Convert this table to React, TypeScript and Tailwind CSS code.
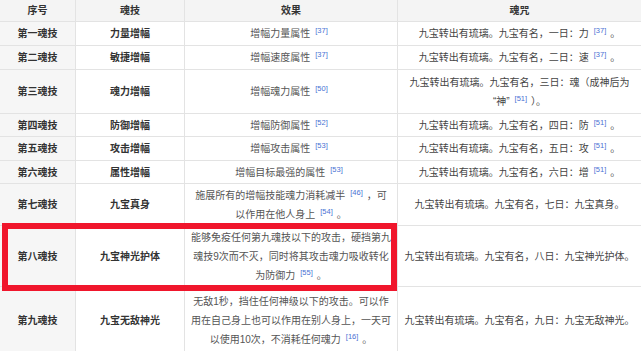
type Cell = React.ReactNode;

const Ref = ({ n }: { n: string }) => (
  <sup className="text-[7.5px] text-[#4a72d4] ml-[5px] mr-[4px]">[{n}]</sup>
);

const rows: { no: string; name: string; effect: Cell; spell: Cell }[] = [
  {
    no: "第一魂技",
    name: "力量增幅",
    effect: <>增幅力量属性<Ref n="37" /></>,
    spell: <>九宝转出有琉璃。九宝有名，一日：力<Ref n="37" />。</>,
  },
  {
    no: "第二魂技",
    name: "敏捷增幅",
    effect: <>增幅速度属性<Ref n="37" /></>,
    spell: <>九宝转出有琉璃。九宝有名，二日：速<Ref n="37" />。</>,
  },
  {
    no: "第三魂技",
    name: "魂力增幅",
    effect: <>增幅魂力属性<Ref n="50" /></>,
    spell: (
      <>
        九宝转出有琉璃。九宝有名，三日：魂（成神后为
        <br />
        “神”<Ref n="51" />）。
      </>
    ),
  },
  {
    no: "第四魂技",
    name: "防御增幅",
    effect: <>增幅防御属性<Ref n="52" /></>,
    spell: <>九宝转出有琉璃。九宝有名，四日：防<Ref n="51" />。</>,
  },
  {
    no: "第五魂技",
    name: "攻击增幅",
    effect: <>增幅攻击属性<Ref n="53" /></>,
    spell: <>九宝转出有琉璃。九宝有名，五日：攻<Ref n="51" />。</>,
  },
  {
    no: "第六魂技",
    name: "属性增幅",
    effect: <>增幅目标最强的属性<Ref n="53" /></>,
    spell: <>九宝转出有琉璃。九宝有名，六日：增<Ref n="51" />。</>,
  },
  {
    no: "第七魂技",
    name: "九宝真身",
    effect: (
      <>
        施展所有的增幅技能魂力消耗减半<Ref n="46" />，可
        <br />
        以作用在他人身上<Ref n="54" />。
      </>
    ),
    spell: <>九宝转出有琉璃。九宝有名，七日：九宝真身。</>,
  },
  {
    no: "第八魂技",
    name: "九宝神光护体",
    effect: (
      <>
        能够免疫任何第九魂技以下的攻击，硬挡第九
        <br />
        魂技9次而不灭，同时将其攻击魂力吸收转化
        <br />
        为防御力<Ref n="55" />。
      </>
    ),
    spell: <>九宝转出有琉璃。九宝有名，八日：九宝神光护体。</>,
  },
  {
    no: "第九魂技",
    name: "九宝无敌神光",
    effect: (
      <>
        无敌1秒，挡住任何神级以下的攻击。可以作
        <br />
        用在自己身上也可以作用在别人身上，一天可
        <br />
        以使用10次，不消耗任何魂力<Ref n="16" />。
      </>
    ),
    spell: <>九宝转出有琉璃。九宝有名，九日：九宝无敌神光。</>,
  },
];

const cell = "flex items-center justify-center text-center whitespace-nowrap px-[4px]";

const App = () => {
  return (
    <div
      className="relative w-[641px] h-[351px] overflow-hidden bg-white text-[10px] leading-[19px]"
      style={{ fontFamily: '"Liberation Sans", "Noto Sans CJK SC", sans-serif' }}
    >
      <div className="grid grid-cols-[75px_108px_212px_243px] grid-rows-[21px_23px_23px_43px_22px_23px_22px_41px_60px_66px] gap-px bg-[#e3e3e3]">
        <div className={`${cell} bg-[#f4f4f4] font-bold text-[#333]`}>序号</div>
        <div className={`${cell} bg-[#f4f4f4] font-bold text-[#333]`}>魂技</div>
        <div className={`${cell} bg-[#f4f4f4] font-bold text-[#333]`}>效果</div>
        <div className={`${cell} bg-[#f4f4f4] font-bold text-[#333]`}>魂咒</div>
        {rows.map((r) => (
          <>
            <div key={r.no + "a"} className={`${cell} bg-[#f6f6f6] font-bold text-[#333]`}>
              {r.no}
            </div>
            <div key={r.no + "b"} className={`${cell} bg-white font-bold text-[#333]`}>
              {r.name}
            </div>
            <div key={r.no + "c"} className={`${cell} bg-white text-[#555]`}>
              <div>{r.effect}</div>
            </div>
            <div key={r.no + "d"} className={`${cell} bg-white text-[#444]`}>
              <div>{r.spell}</div>
            </div>
          </>
        ))}
      </div>
      <div className="absolute left-[2px] top-[223px] w-[395px] h-[68px] border-[6px] border-[#f0162c]" />
    </div>
  );
};

export default App;
